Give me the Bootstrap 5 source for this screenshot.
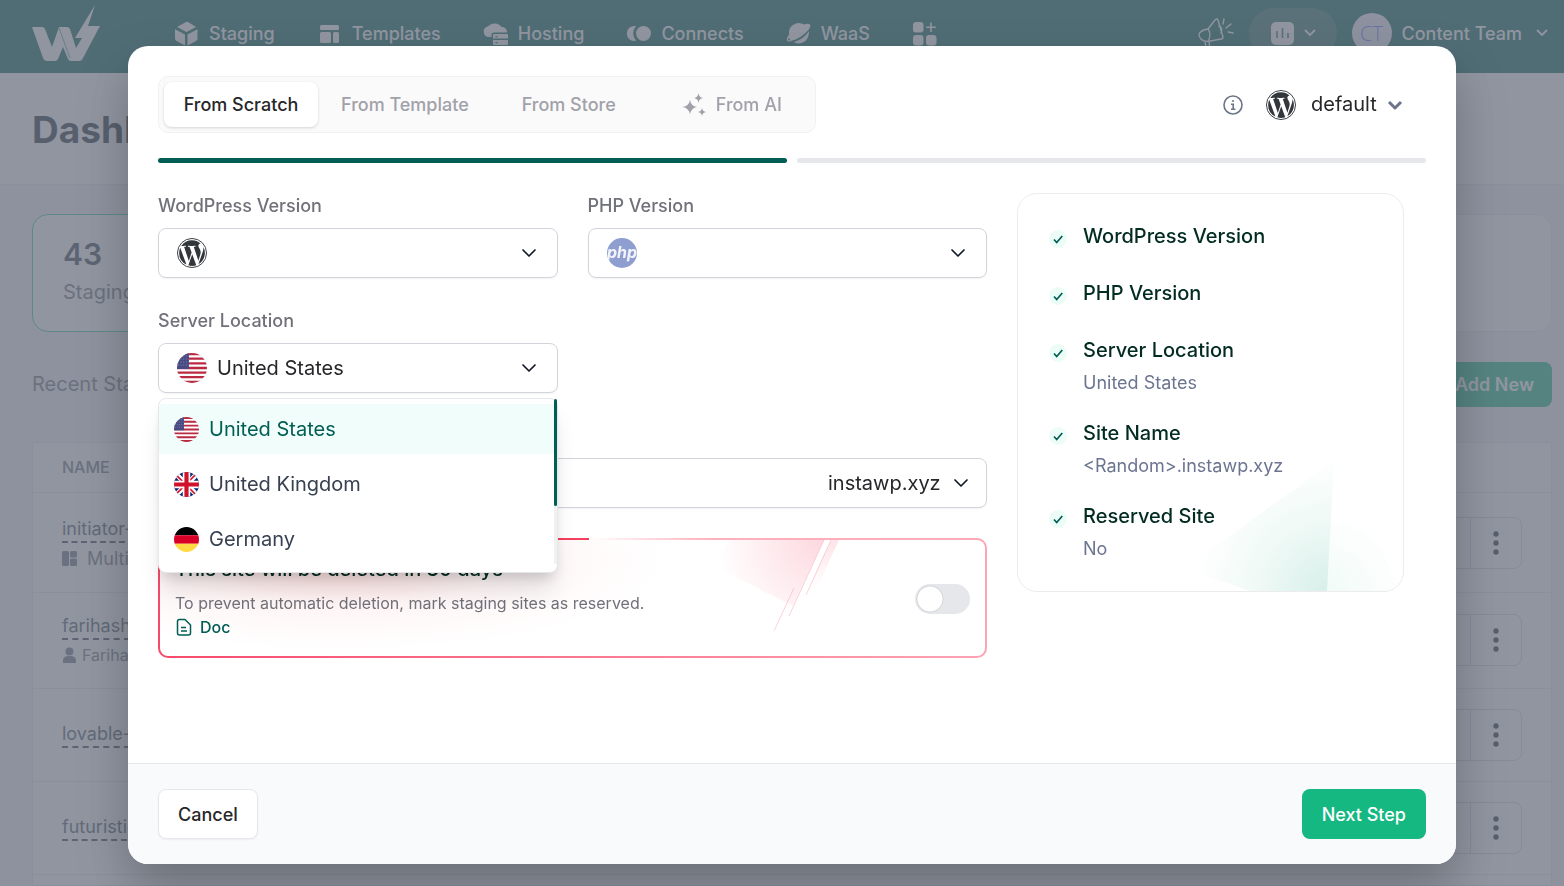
<!DOCTYPE html>
<html lang="en">
<head>
<meta charset="utf-8">
<meta name="viewport" content="width=device-width, initial-scale=1">
<title>Dashboard - Create site</title>
<link rel="stylesheet" href="https://cdn.jsdelivr.net/npm/bootstrap@5.3.0/dist/css/bootstrap.min.css">
<style>
:root{--brand:#005e54;--accent:#15b881;--ink:#27272a;--muted:#71717a;--line:#e5e7eb;--field:#d1d5db}
body{font-family:Inter,"Liberation Sans",sans-serif;font-size:18px;line-height:25px;color:#374151;background:#f1f2f6}
svg{display:block;flex:none}
.shell{height:100vh;overflow:hidden}
/* top bar */
.topbar{background:var(--brand);color:#fff;padding:8px 16px 15px 32px;height:73px}
.topbar a{color:#fff;text-decoration:none;font-weight:500}
.main-links{gap:42px;margin-left:74px}
.main-links a{display:flex;align-items:center;gap:10px}
.tools{gap:15px}
.tools a,.pill{gap:10px}
.pill{width:88px;height:50px;border-radius:25px;background:#2f7168;border:0;color:#fff}
.avatar{width:40px;height:40px;border-radius:50%;background:#f3f0ff;color:#6874ff;font-family:"Open Sans",sans-serif;font-size:20px;font-weight:300}
/* page behind the dialog */
.page-head{background:#fff;border-bottom:1px solid var(--line);padding:33px 32px 30px}
.page-head h1{font-size:37px;line-height:48px;font-weight:700;color:#1f2937;margin:0}
.content{padding:29px 12px 0 32px}
.stats{display:grid;grid-template-columns:repeat(4,1fr);gap:30px}
.stat{background:#fff;border:1px solid var(--line);border-radius:16px;padding:20px 30px;height:118px}
.stat.on{border-color:#3fc99d}
.stat b{display:block;font-size:30px;line-height:38px;font-weight:600;color:#374151}
.stat span{display:block;font-size:20px;line-height:38px;color:var(--muted)}
.recent{font-size:20px;color:var(--muted);margin:30px 0 35px}
.add-new{background:var(--accent);color:#fff;font-weight:600;font-size:18px;border:0;border-radius:8px;padding:10px 18px 10px 40px}
.panel{background:#fff;border:1px solid var(--line)}
.sites{width:100%;border-collapse:collapse}
.sites th{font-size:16px;font-weight:500;color:var(--muted);height:49px;padding:0 29px}
.sites td{padding:20px 29px;vertical-align:middle}
.sites tr{border-bottom:1px solid var(--line)}
.sites tr.tall td{padding-top:23px;padding-bottom:21px}
.site-link{display:inline-block;color:#4b5563;text-decoration:none;border-bottom:2px dashed #374151;line-height:24px}
.owner{display:flex;align-items:center;color:var(--muted);margin-top:3px;gap:10px}
.owner.person{font-size:16px;gap:5px}
.acts{display:inline-flex;height:52px;border:1px solid var(--field);border-radius:8px}
.acts button{width:51px;border:0;border-left:1px solid var(--field);background:none;padding:0;display:flex;align-items:center;justify-content:center}
.acts button:first-child{border-left:0}
/* dialog */
.modal-backdrop.veil{background:#6b7280;opacity:.75}
.site-dialog{max-width:none;margin:46px 108px 22px 128px}
.site-dialog .modal-content{min-height:calc(100vh - 68px);border:0;border-radius:20px;overflow:hidden;box-shadow:0 24px 50px rgba(0,0,0,.25)}
.site-dialog .modal-body{padding:30px 30px 40px}
.tabs{border:1px solid #f1f1f3;background:#fafafa;border-radius:10px;padding:5px}
.tabs button{height:45px;min-width:154px;border:0;background:none;border-radius:8px;font-weight:500;color:#a1a1aa;padding:0 23px;white-space:nowrap}
.tabs button.active{background:#fff;color:var(--ink);padding:0 18px;box-shadow:0 1px 3px rgba(0,0,0,.15)}
.tabs button.ai{display:flex;align-items:center;gap:10px;padding:0 28px 0 36px}
.steps{gap:10px;margin:25px 0 30px}
.steps i{height:5px;border-radius:3px;background:#e5e7eb;flex:1}
.steps i.done{background:var(--brand)}
.config{padding-right:22px}
.config label{margin:0 15px 0 23px}
.layout{display:grid;grid-template-columns:minmax(0,829fr) minmax(0,387fr);gap:30px;padding-right:22px;align-items:start}
.fields{display:grid;grid-template-columns:1fr 1fr;gap:30px}
.wide{grid-column:1/-1}
.fields label.cap{display:block;font-weight:500;color:var(--muted);margin-bottom:10px}
.field{display:flex;align-items:center;height:50px;border:1px solid var(--field);border-radius:8px;background:#fff;padding-left:18px;gap:10px;box-shadow:0 1px 2px rgba(0,0,0,.05)}
.field select,.config select{appearance:none;border:0;outline:0;height:48px;font-size:20px;color:var(--ink);padding:0 40px 0 0;background:transparent url("data:image/svg+xml,%3Csvg xmlns='http://www.w3.org/2000/svg' width='16' height='10' viewBox='0 0 16 10'%3E%3Cpath d='M2 2l6 6 6-6' fill='none' stroke='%23111827' stroke-width='1.7' stroke-linecap='round' stroke-linejoin='round'/%3E%3C/svg%3E") no-repeat right 20px center}
.field select{flex:1;min-width:0;border-radius:8px}
.field select.zone{flex:none;padding-right:45px;background-position:right 17px center}
.field input{border:0;outline:0;flex:1;min-width:0;background:none}
.config select{padding-right:27px;background-image:url("data:image/svg+xml,%3Csvg xmlns='http://www.w3.org/2000/svg' width='16' height='10' viewBox='0 0 16 10'%3E%3Cpath d='M2 2l6 6 6-6' fill='none' stroke='%236b7488' stroke-width='3' stroke-linejoin='round'/%3E%3C/svg%3E");background-position:right 1px center}
.menu{position:absolute;top:calc(100% + 5px);left:0;right:0;height:175px;background:#fff;border:1px solid var(--line);border-radius:8px;padding:5px 3px 5px 0;box-shadow:0 20px 25px -5px rgba(0,0,0,.12),0 8px 12px -4px rgba(0,0,0,.12);z-index:3}
.menu button{display:flex;align-items:center;gap:10px;width:100%;height:50px;margin-bottom:5px;border:0;background:none;padding:0 15px;font-size:20px;color:#374151}
.menu button.active{background:#f0fdfa;color:var(--brand)}
.thumb{position:absolute;top:0;right:0;width:3px;height:107px;border-radius:2px;background:var(--brand)}
.track{position:absolute;top:0;right:0;width:3px;height:165px;background:#f1f1f1}
.expiry{position:relative;display:flex;align-items:center;justify-content:space-between;min-height:120px;padding:1px 15px 0;border:2px solid transparent;border-radius:10px;
background:radial-gradient(ellipse 330px 90px at 180px 20px,rgba(254,205,205,.7),rgba(254,226,226,.35) 50%,rgba(255,255,255,0)) padding-box,linear-gradient(#fff,#fff) padding-box,linear-gradient(90deg,#f74a6b,#fda4b4) border-box}
.expiry .art{position:absolute;top:0;right:146px}
.expiry h2{font-size:20px;line-height:28px;font-weight:500;color:#022c22;margin:0 0 8px}
.expiry p{font-size:16px;line-height:24px;color:var(--muted);margin:0}
.expiry a{font-size:16px;line-height:24px;font-weight:500;color:var(--brand);text-decoration:none;display:inline-flex;align-items:center;gap:7px}
.edge{position:absolute;top:-2px;left:10px;right:48%;height:2px;background:#f43f5e}
.edge.fade-edge{left:52%;right:33%;background:linear-gradient(90deg,#fff,#fcb0bd)}
.edge.pale{left:67%;right:10px;background:linear-gradient(90deg,#fcb0bd,#fda9b8)}
.expiry .form-check-input{width:55px;height:30px;margin:0;float:none;border:0;border-radius:15px;background:#e5e7eb radial-gradient(circle at 15px 15px,#fff 12px,rgba(0,0,0,.08) 13px,transparent 14px) no-repeat}
.summary{position:relative;border:1px solid #ececef;border-radius:20px;padding:25px 30px 31px 31px;overflow:hidden}
.summary .art{position:absolute;right:0;bottom:0}
.summary ul{display:flex;flex-direction:column;gap:22px;margin:0}
.summary li{display:flex;gap:16px}
.summary li>svg{margin-top:11px}
.summary b{display:block;font-size:20px;line-height:35px;font-weight:500;color:#022c22}
.summary span{display:block;line-height:22px;margin-top:4px;color:#6b7590}
.site-dialog .modal-footer{background:#f9fafb;border-top:1px solid var(--line);padding:25px 30px;justify-content:space-between;margin-top:auto;border-radius:0}
.site-dialog .modal-footer .btn{margin:0;height:50px;font-size:18px;font-weight:500;border-radius:8px;padding:0 19px}
.cancel{background:#fff;border:1px solid var(--line);color:var(--ink);box-shadow:0 1px 2px rgba(0,0,0,.05)}
.next{background:var(--accent);color:#fff}
</style>
</head>
<body class="modal-open overflow-hidden">
<svg width="0" height="0" class="position-absolute" aria-hidden="true">
<defs>
<clipPath id="disc"><circle cx="15" cy="15" r="15"/></clipPath>
<symbol id="wp" viewBox="0 0 16 16"><path d="M12.633 7.653c0-.848-.305-1.435-.566-1.892l-.08-.13c-.317-.51-.594-.958-.594-1.48 0-.63.478-1.218 1.152-1.218q.03 0 .058.003l.031.003A6.84 6.84 0 0 0 8 1.137 6.86 6.86 0 0 0 2.266 4.23c.16.005.313.009.442.009.717 0 1.828-.087 1.828-.087.37-.022.414.521.044.565 0 0-.371.044-.785.065l2.5 7.434 1.5-4.506-1.07-2.929c-.369-.022-.719-.065-.719-.065-.37-.022-.326-.588.043-.566 0 0 1.134.087 1.808.087.718 0 1.83-.087 1.83-.087.37-.022.413.522.043.566 0 0-.372.043-.785.065l2.48 7.377.684-2.287.054-.173c.27-.86.469-1.495.469-2.046zM1.137 8a6.86 6.86 0 0 0 3.868 6.176L1.73 5.206A6.8 6.8 0 0 0 1.137 8M6.061 14.583 8.121 8.6l2.109 5.78q.02.05.049.094a6.85 6.85 0 0 1-4.218.109m7.96-9.876q.046.328.047.706c0 .696-.13 1.479-.522 2.458l-2.096 6.06a6.86 6.86 0 0 0 2.572-9.224z"/><circle cx="8" cy="8" r="7.75" fill="none" stroke="currentColor" stroke-width=".5"/></symbol>
<symbol id="us" viewBox="0 0 30 30"><g clip-path="url(#disc)"><path fill="#fff" d="M0 0h30v30H0z"/><path stroke="#b92b42" stroke-width="2.3" d="M0 1.1h30M0 5.7h30M0 10.3h30M0 15h30M0 19.6h30M0 24.2h30M0 28.8h30"/><path fill="#474a83" d="M0 0h12v16H0z"/><path stroke="#8385ae" stroke-width="1" stroke-dasharray="1 1.6" d="M1 3h11M1 6h11M1 9h11M1 12h11"/></g></symbol>
<symbol id="uk" viewBox="0 0 30 30"><g clip-path="url(#disc)"><path fill="#0a2472" d="M0 0h30v30H0z"/><path stroke="#fff" stroke-width="6" d="M0 0l30 30M30 0L0 30"/><path stroke="#d0122d" stroke-width="2" d="M0 1l30 30M30 -1L0 29"/><path stroke="#fff" stroke-width="9" d="M15 0v30M0 15h30"/><path stroke="#d0122d" stroke-width="5" d="M15 0v30M0 15h30"/></g></symbol>
<symbol id="de" viewBox="0 0 30 30"><g clip-path="url(#disc)"><path d="M0 0h30v10H0z"/><path fill="#d80027" d="M0 10h30v10H0z"/><path fill="#ffda44" d="M0 20h30v10H0z"/></g></symbol>
<symbol id="tick" viewBox="0 0 18 18"><circle cx="9" cy="9" r="9" fill="#ecfdf8"/><path d="M5 9.5l2.700 3L13.300 6" fill="none" stroke="#005e54" stroke-width="1.700"/></symbol>
<symbol id="dots" viewBox="0 0 6 24"><circle cx="3" cy="3" r="2.700"/><circle cx="3" cy="12" r="2.700"/><circle cx="3" cy="21" r="2.700"/></symbol>
</defs></svg>

<div class="shell d-flex flex-column">
<header class="topbar d-flex align-items-center">
  <a href="#" aria-label="Home"><svg width="68" height="56" viewBox="0 0 68 56" fill="#fff"><path d="M0 22h10q2 0 3 2l7 18 7-20h8q2 0 3 2l6 19 6-10h-7l20-33-7 21h12L51 53q-1 3-4 3h-8q-2 0-3-2l-5-12-5 12q-1 2-3 2h-8q-3 0-4-3z"/><path d="M27 23l11 30" fill="none" stroke="#005e54" stroke-width=".6"/></svg></a>
  <nav class="main-links d-flex align-items-center">
    <a href="#"><svg width="25" height="25" viewBox="0 0 25 25" fill="#fff"><path d="M12 1q1-.6 2 0l8 5-9.500 5L3 6zM1 8.200l10 5.300V24.500L2.500 20Q1 19 1 17.500zM23.500 8.200L13.500 13.500V24.500L22 20q1.500-1 1.500-2.500z"/></svg>Staging</a>
    <a href="#"><svg width="25" height="25" viewBox="0 0 25 25" fill="#fff"><rect x="3" y="4" width="19" height="5" rx="1.500"/><rect x="3" y="11" width="11" height="11" rx="1.500"/><rect x="16" y="11" width="6" height="11" rx="1.500"/></svg>Templates</a>
    <a href="#"><svg width="25" height="25" viewBox="0 0 25 25" fill="#fff"><path d="M6 16A5.300 5.300 0 0 1 5 5.500 8 7 0 0 1 18.500 6 5 5 0 0 1 24 11.500H11Q8.500 11.500 8.500 14v2z"/><path fill-rule="evenodd" d="M11 13h13q1 0 1 1v3.500H10V14q0-1 1-1m1.500 2v1.200h2V15zM10 19h15v4q0 1-1 1H11q-1 0-1-1zm2.500 2v1.200h2V21z"/></svg>Hosting</a>
    <a href="#"><svg width="25" height="25" viewBox="0 0 25 25" fill="#fff"><circle cx="17.500" cy="12.500" r="7.500"/><path d="M10 5.200A7.500 7.500 0 1 0 10 19.800A11 11 0 0 1 10 5.200z"/></svg>Connects</a>
    <a href="#"><svg width="25" height="25" viewBox="0 0 25 25" fill="#fff"><path d="M3 13.500A10 10 0 0 1 18 3.500Q24 1.500 24.500 4.500 24 9 16 15 7 21 2 20.500-1 19.500 3 13.500"/><path d="M8 21q10-3 15-11 0 12-11 12.500-2.500-.3-4-1.500"/><path d="M5 20.500q10-2 18-11.500" fill="none" stroke="#005e54" stroke-width="1"/><circle cx="3" cy="18.500" r="1" fill="#005e54"/></svg>WaaS</a>
    <a href="#" aria-label="More apps"><svg width="25" height="25" viewBox="0 0 25 25" fill="#fff"><rect x="1" y="1" width="10.500" height="10.500" rx="3"/><rect x="1" y="14" width="10.500" height="10.500" rx="3"/><rect x="14" y="14" width="10.500" height="10.500" rx="3"/><path d="M19 1.500v9.500M14.200 6.200h9.600" stroke="#fff" stroke-width="1.600"/></svg></a>
  </nav>
  <div class="tools ms-auto d-flex align-items-center">
    <svg width="36" height="36" viewBox="0 0 36 36" fill="none" stroke="#fff" stroke-width="1.400" stroke-linecap="round" stroke-linejoin="round"><path d="M10 14L17 5q2-2 3 0l5 17q0 2-2 2L10 26.500M10 14q-7 1-9 5 0 7 9 7.500M10 14q4 5 0 12.500M7 27l1 5q1 2.500 4 1.500l-1-7M21 11q4 2 2 7M26 4l-1 5M33 9l-5 4M35 18l-5-1"/></svg>
    <button class="pill d-flex align-items-center justify-content-center p-0" type="button" aria-label="Usage"><svg width="24" height="24" viewBox="0 0 24 24"><rect x="1" y="1" width="23" height="23" rx="5" fill="#fff"/><path d="M7 10v7M12.500 7v10M18 12v5" stroke="#2f7168" stroke-width="1.600"/></svg><svg width="12" height="8" viewBox="0 0 12 8" fill="none" stroke="#fff" stroke-width="1.800"><path d="M1 1l5 5 5-5"/></svg></button>
    <a href="#" class="d-flex align-items-center"><span class="avatar d-flex align-items-center justify-content-center">CT</span>Content Team<svg class="ms-1" width="12" height="8" viewBox="0 0 12 8" fill="none" stroke="#fff" stroke-width="1.800"><path d="M1 1l5 5 5-5"/></svg></a>
  </div>
</header>
<div class="page-head"><h1>Dashboard</h1></div>
<main class="content d-flex flex-column flex-fill">
  <div class="stats"><div class="stat on"><b>43</b><span>Staging</span></div><div class="stat"></div><div class="stat"></div><div class="stat"></div></div>
  <div class="recent d-flex justify-content-between align-items-center"><span>Recent Staging</span><button class="add-new" type="button">Add New</button></div>
  <div class="panel flex-fill">
    <table class="sites">
      <thead><tr><th>NAME</th><th></th></tr></thead>
      <tbody>
      <tr class="tall"><td><a class="site-link" href="#">initiator-site</a><div class="owner"><svg width="15" height="15" viewBox="0 0 15 15" fill="#6b7280"><rect width="7" height="15" rx="1.500"/><rect x="8" width="7" height="6.500" rx="1.500"/><rect x="8" y="7.500" width="7" height="7.500" rx="1.500"/></svg>Multi</div></td><td class="text-end"><span class="acts align-middle"><button type="button" aria-label="Open"></button><button type="button" aria-label="More"><svg width="6" height="24" fill="#1f2937"><use href="#dots"/></svg></button></span></td></tr>
      <tr><td><a class="site-link" href="#">farihashsite</a><div class="owner person"><svg width="15" height="16" viewBox="0 0 15 16" fill="#6b7280"><circle cx="7.500" cy="4.500" r="4"/><path d="M1 16q-1-7 5-7h3q6 0 5 7z"/></svg>Fariha</div></td><td class="text-end"><span class="acts align-middle"><button type="button" aria-label="Open"></button><button type="button" aria-label="More"><svg width="6" height="24" fill="#1f2937"><use href="#dots"/></svg></button></span></td></tr>
      <tr><td><a class="site-link" href="#">lovable-site</a></td><td class="text-end"><span class="acts align-middle"><button type="button" aria-label="Open"></button><button type="button" aria-label="More"><svg width="6" height="24" fill="#1f2937"><use href="#dots"/></svg></button></span></td></tr>
      <tr><td><a class="site-link" href="#">futuristic-site</a></td><td class="text-end"><span class="acts align-middle"><button type="button" aria-label="Open"></button><button type="button" aria-label="More"><svg width="6" height="24" fill="#1f2937"><use href="#dots"/></svg></button></span></td></tr>
      </tbody>
    </table>
  </div>
</main>
</div>

<div class="modal-backdrop veil"></div>
<div class="modal d-block" role="dialog" aria-modal="true" aria-label="Create site">
<div class="modal-dialog site-dialog"><form class="modal-content">
  <div class="modal-body">
    <div class="d-flex justify-content-between align-items-center">
      <div class="tabs d-flex" role="tablist">
        <button type="button" class="active" role="tab" aria-selected="true">From Scratch</button>
        <button type="button" role="tab">From Template</button>
        <button type="button" role="tab">From Store</button>
        <button type="button" role="tab" class="ai"><svg width="24" height="24" viewBox="0 0 24 24" fill="#a1a1aa"><path d="M8 7q1 6 7 7-6 1-7 7.500Q7 15 .5 14 7 13 8 7M16.500 0q.5 4.500 4.500 5-4 .5-4.500 5-.5-4.500-4.500-5 4-.5 4.500-5M20 15q.5 3.500 4 4-3.500.5-4 4-.5-3.500-4-4 3.500-.5 4-4"/></svg>From AI</button>
      </div>
      <div class="config d-flex align-items-center">
        <svg width="20" height="20" viewBox="0 0 20 20" fill="none" stroke="#6b7488" stroke-width="1.600"><circle cx="10" cy="10" r="9"/><path d="M8 9.200h2.200v5M8 14.300h4.400"/><circle cx="10" cy="6" r="1" fill="#6b7488" stroke="none"/></svg>
        <label for="config"><svg width="30" height="30" fill="#32373c" color="#32373c"><title>Configuration</title><use href="#wp"/></svg></label>
        <select id="config"><option>default</option></select>
      </div>
    </div>
    <div class="steps d-flex"><i class="done"></i><i></i></div>
    <div class="layout">
      <div class="fields">
        <div><label class="cap" for="wpv">WordPress Version</label><div class="field"><svg width="30" height="30" fill="#32373c" color="#32373c"><use href="#wp"/></svg><select id="wpv"><option></option></select></div></div>
        <div><label class="cap" for="phpv">PHP Version</label><div class="field"><svg width="30" height="30" viewBox="0 0 30 30"><g clip-path="url(#disc)"><path fill="#8f9ed1" d="M0 0h30v30H0z"/><text x="15" y="20" text-anchor="middle" font-family="Inter, sans-serif" font-size="16" font-weight="700" font-style="italic" fill="#f3f4fb">php</text></g></svg><select id="phpv"><option></option></select></div></div>
        <div><label class="cap" for="loc">Server Location</label><div class="position-relative"><div class="field"><svg width="30" height="30"><use href="#us"/></svg><select id="loc"><option>United States</option></select></div>
          <div class="menu" role="listbox">
            <button type="button" class="active" role="option" aria-selected="true"><svg width="25" height="25"><use href="#us"/></svg>United States</button>
            <button type="button" role="option"><svg width="25" height="25"><use href="#uk"/></svg>United Kingdom</button>
            <button type="button" role="option"><svg width="25" height="25"><use href="#de"/></svg>Germany</button>
            <span class="track"></span><span class="thumb"></span>
          </div></div></div>
        <div class="wide"><label class="cap" for="site">Site Name</label><div class="field"><input id="site" type="text"><select class="zone" aria-label="Domain"><option>instawp.xyz</option></select></div></div>
        <div class="wide expiry">
          <span class="edge"></span><span class="edge fade-edge"></span><span class="edge pale"></span>
          <svg class="art" width="130" height="96" viewBox="0 0 130 96" fill="none"><defs><radialGradient id="rose" gradientUnits="userSpaceOnUse" cx="112" cy="0" r="105"><stop stop-color="#f43f5e" stop-opacity=".2"/><stop offset=".5" stop-color="#f43f5e" stop-opacity=".1"/><stop offset="1" stop-color="#f43f5e" stop-opacity="0"/></radialGradient><linearGradient id="rose2" x1="0" y1="0" x2="0" y2="1"><stop stop-color="#f43f5e" stop-opacity=".14"/><stop offset="1" stop-color="#f43f5e" stop-opacity="0"/></linearGradient></defs><path d="M20 0h95L84 66 4 26z" fill="url(#rose)"/><path d="M122 0h8l-22 48-8 0z" fill="url(#rose2)"/><path d="M115 0L80 76M122 0L97 55M85 48L65 91" stroke="#f9b4c0" stroke-opacity=".6"/></svg>
          <div class="position-relative"><h2>This site will be deleted in 30 days</h2><p>To prevent automatic deletion, mark staging sites as reserved.</p><a href="#"><svg width="18" height="18" viewBox="0 0 18 18" fill="none" stroke="#005e54" stroke-width="1.500" stroke-linejoin="round"><path d="M4.500 1.500H10l5.500 5.500v8q0 2-2 2h-9q-2 0-2-2V3.500q0-2 2-2M6 9.500h5M6 13h6"/></svg>Doc</a></div>
          <div class="form-switch p-0 position-relative"><input class="form-check-input d-block" type="checkbox" role="switch" aria-label="Reserve this site"></div>
        </div>
      </div>
      <aside class="summary">
        <svg class="art" width="230" height="130" viewBox="0 0 230 130"><defs><radialGradient id="mint" gradientUnits="userSpaceOnUse" cx="156" cy="130" r="135"><stop stop-color="#10a37a" stop-opacity=".17"/><stop offset=".5" stop-color="#10a37a" stop-opacity=".07"/><stop offset="1" stop-color="#10b981" stop-opacity="0"/></radialGradient><radialGradient id="mint2" gradientUnits="userSpaceOnUse" cx="154" cy="130" r="80"><stop stop-color="#10b981" stop-opacity=".06"/><stop offset="1" stop-color="#10b981" stop-opacity="0"/></radialGradient></defs><path d="M161 0l-7 130H77L10 108z" fill="url(#mint)"/><path d="M161 0l69 130h-76z" fill="url(#mint2)"/></svg>
        <ul class="list-unstyled position-relative">
          <li><svg width="18" height="18"><use href="#tick"/></svg><div><b>WordPress Version</b></div></li>
          <li><svg width="18" height="18"><use href="#tick"/></svg><div><b>PHP Version</b></div></li>
          <li><svg width="18" height="18"><use href="#tick"/></svg><div><b>Server Location</b><span>United States</span></div></li>
          <li><svg width="18" height="18"><use href="#tick"/></svg><div><b>Site Name</b><span>&lt;Random&gt;.instawp.xyz</span></div></li>
          <li><svg width="18" height="18"><use href="#tick"/></svg><div><b>Reserved Site</b><span>No</span></div></li>
        </ul>
      </aside>
    </div>
  </div>
  <div class="modal-footer"><button type="button" class="btn cancel">Cancel</button><button type="submit" class="btn next">Next Step</button></div>
</form></div></div>
<script src="https://cdn.jsdelivr.net/npm/bootstrap@5.3.0/dist/js/bootstrap.bundle.min.js"></script>
</body>
</html>
